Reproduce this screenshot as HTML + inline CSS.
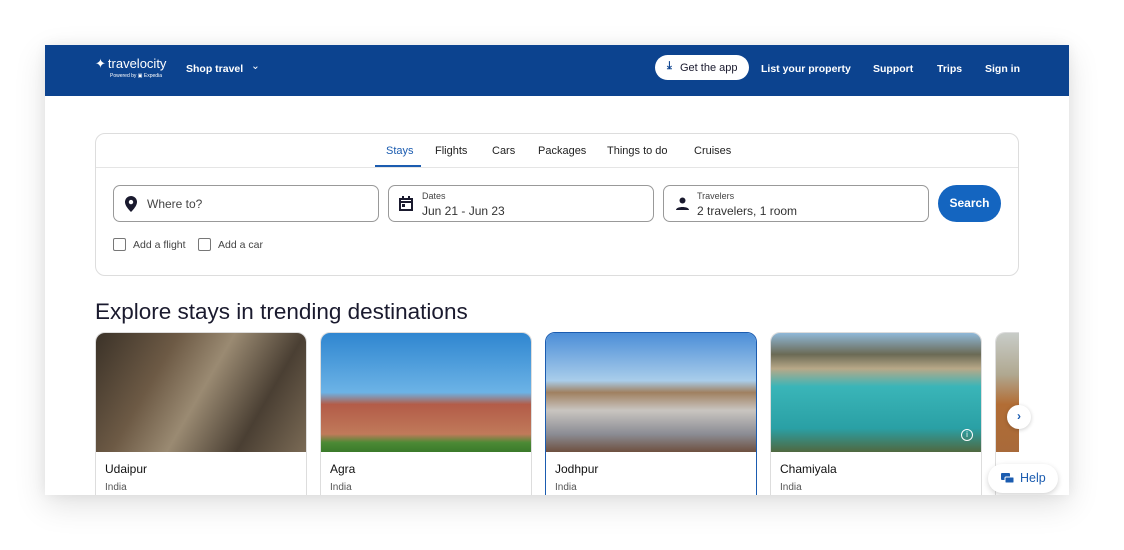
<!DOCTYPE html>
<html><head><style>
*{box-sizing:border-box;margin:0;padding:0}
body{width:1124px;height:550px;background:#fff;font-family:"Liberation Sans",sans-serif;position:relative;overflow:hidden}
.page{position:absolute;left:45px;top:45px;width:1024px;height:450px;background:#fff;box-shadow:0 10px 30px rgba(0,0,0,.12),0 0 12px rgba(0,0,0,.06);overflow:hidden}
.hdr{position:absolute;left:0;top:0;width:1024px;height:51px;background:#0c438f;color:#fff;font-weight:bold;font-size:10.5px}
.hdr span{position:absolute;top:18px}
.app{position:absolute;left:610px;top:10px;width:94px;height:25px;background:#fff;border-radius:13px;color:#1a1a2e;font-weight:normal;font-size:11px;padding:7px 0 0 25px}
.box{position:absolute;left:50px;top:88px;width:924px;height:143px;border:1px solid #ddd;border-radius:10px}
.tabs{position:absolute;left:0;top:0;width:100%;height:34px;border-bottom:1px solid #e5e5e5;font-size:11px;color:#222}
.tabs span{position:absolute;top:11px}
.in{position:absolute;top:51px;height:37px;border:1px solid #999;border-radius:7px;font-size:12px;color:#222}
.lbl{position:absolute;left:33px;top:5px;font-size:9px;color:#444}
.val{position:absolute;left:33px;top:18px;font-size:12px;color:#333}
.cb{position:absolute;top:104px;width:13px;height:13px;border:1.5px solid #777;border-radius:2px}
.cbt{position:absolute;top:105px;font-size:10.5px;color:#444}
h2{position:absolute;left:50px;top:254px;font-size:22.5px;font-weight:normal;color:#1a1a2e}
.card{position:absolute;top:287px;width:212px;height:175px;border:1px solid #ddd;border-radius:10px;overflow:hidden;background:#fff}
.card .im{height:119px}
.card .t{position:absolute;left:9px;top:129px;font-size:12px;color:#111}
.card .s{position:absolute;left:9px;top:149px;font-size:10px;color:#555}
</style></head><body>
<div class="page">
<div class="hdr">
 <div style="position:absolute;left:50px;top:11px;font-weight:normal;font-size:13px">✦<span style="position:relative;top:0;left:2px;font-size:13px">travelocity</span></div>
 <div style="position:absolute;left:65px;top:28px;font-size:5px;font-weight:normal">Powered by ▣ Expedia</div>
 <span style="left:141px">Shop travel</span><span style="left:206px;top:15px;font-weight:normal">⌄</span>
 <div class="app"><span style="left:12px;top:5px;color:#0c438f;font-weight:bold">⤓</span>Get the app</div>
 <span style="left:716px">List your property</span><span style="left:828px">Support</span><span style="left:892px">Trips</span><span style="left:940px">Sign in</span>
</div>
<div class="box">
 <div class="tabs"><span style="left:290px;color:#1b5cb0">Stays</span><div style="position:absolute;left:279px;top:31px;width:46px;height:2px;background:#1b5cb0"></div>
 <span style="left:339px">Flights</span><span style="left:396px">Cars</span><span style="left:442px">Packages</span><span style="left:511px">Things to do</span><span style="left:598px">Cruises</span></div>
 <div class="in" style="left:17px;width:266px"><svg style="position:absolute;left:11px;top:10px" width="12" height="16" viewBox="0 0 12 16"><path d="M6 0a6 6 0 0 0-6 6c0 4.5 6 10 6 10s6-5.5 6-10a6 6 0 0 0-6-6zm0 8.3a2.2 2.2 0 1 1 0-4.4 2.2 2.2 0 0 1 0 4.4z" fill="#1a1a2e"/></svg><div style="position:absolute;left:33px;top:11px;color:#444">Where to?</div></div>
 <div class="in" style="left:292px;width:266px"><svg style="position:absolute;left:10px;top:10px" width="14" height="15" viewBox="0 0 14 15"><path d="M1 3h12v11H1z M1 3h12v3H1z" fill="none" stroke="#1a1a2e" stroke-width="2"/><rect x="3" y="0" width="2" height="3" fill="#1a1a2e"/><rect x="9" y="0" width="2" height="3" fill="#1a1a2e"/><rect x="3" y="8" width="3" height="3" fill="#1a1a2e"/></svg><div class="lbl">Dates</div><div class="val">Jun 21 - Jun 23</div></div>
 <div class="in" style="left:567px;width:266px"><svg style="position:absolute;left:12px;top:11px" width="13" height="13" viewBox="0 0 13 13"><circle cx="6.5" cy="3.5" r="3" fill="#1a1a2e"/><path d="M0 13c0-4 13-4 13 0z" fill="#1a1a2e"/></svg><div class="lbl">Travelers</div><div class="val">2 travelers, 1 room</div></div>
 <div style="position:absolute;left:842px;top:51px;width:63px;height:37px;border-radius:19px;background:#1465c0;color:#fff;font-weight:bold;font-size:12px;text-align:center;line-height:37px">Search</div>
 <div class="cb" style="left:17px"></div><div class="cbt" style="left:37px">Add a flight</div>
 <div class="cb" style="left:102px"></div><div class="cbt" style="left:122px">Add a car</div>
</div>
<h2>Explore stays in trending destinations</h2>
<div class="card" style="left:50px"><div class="im" style="background:linear-gradient(120deg,#3b3228 0%,#6d5a45 30%,#9a8a72 50%,#4a3f33 75%,#7a6a55 100%)"></div><div class="t">Udaipur</div><div class="s">India</div></div>
<div class="card" style="left:275px"><div class="im" style="background:linear-gradient(180deg,#2f86d0 0%,#6cb3e6 50%,#b35c48 60%,#c07a5a 85%,#4c8a35 92%,#3a7a2a 100%)"></div><div class="t">Agra</div><div class="s">India</div></div>
<div class="card" style="left:500px;border:1.5px solid #1b5cb0"><div class="im" style="background:linear-gradient(180deg,#4c8ed8 0%,#a9cdea 40%,#a08060 50%,#c9c5c0 65%,#8b8c94 85%,#6e5040 100%)"></div><div class="t">Jodhpur</div><div class="s">India</div></div>
<div class="card" style="left:725px"><div class="im" style="background:linear-gradient(180deg,#8fb8d8 0%,#6b6a55 18%,#b8a888 30%,#3ab5b8 45%,#2aa0a5 80%,#506840 100%)"></div><div class="t">Chamiyala</div><div class="s">India</div>
 <div style="position:absolute;left:190px;top:96px;width:12px;height:12px;border:1.3px solid #fff;border-radius:50%;color:#fff;font-size:8px;text-align:center;line-height:10px">i</div></div>
<div class="card" style="left:950px;width:24px;border-right:none;border-radius:10px 0 0 10px"><div class="im" style="background:linear-gradient(180deg,#c8ccc8 0%,#b0a890 35%,#b26d35 60%,#a86a3a 100%)"></div></div>
<div style="position:absolute;left:962px;top:360px;width:24px;height:24px;border-radius:50%;background:#fff;box-shadow:0 1px 4px rgba(0,0,0,.2);color:#1b5cb0;font-weight:bold;text-align:center;line-height:23px;font-size:12px">›</div>
<div style="position:absolute;left:943px;top:419px;width:70px;height:29px;border-radius:15px;background:#fff;box-shadow:0 2px 6px rgba(0,0,0,.18);color:#1b5cb0;font-size:12.5px;padding:7px 0 0 32px">Help
 <svg style="position:absolute;left:13px;top:9px" width="13" height="12" viewBox="0 0 13 12"><rect x="0" y="0" width="9" height="7" rx="1" fill="#1b5cb0"/><rect x="4" y="4" width="9" height="6" rx="1" fill="#1b5cb0" stroke="#fff"/></svg></div>
</div>
</body></html>
